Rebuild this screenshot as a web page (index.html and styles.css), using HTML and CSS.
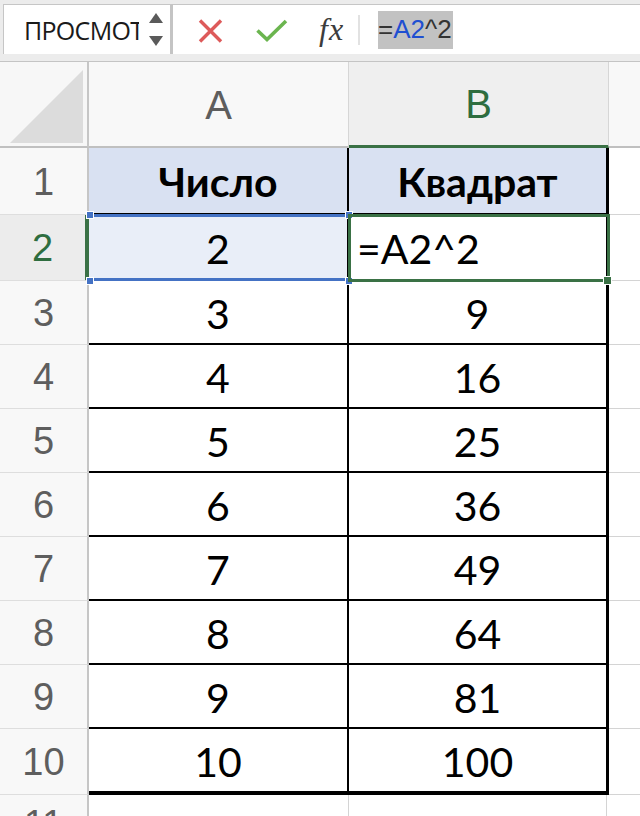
FILE: index.html
```html
<!DOCTYPE html>
<html lang="ru">
<head>
<meta charset="utf-8">
<title>Excel</title>
<link rel="stylesheet" href="styles.css">
</head>
<body>
<div class="toolbar">
  <div class="namebox">
    <div class="name"><span>ПРОСМОТР</span></div>
    <div class="spin">
      <svg width="16" height="36" viewBox="0 0 16 36"><polygon points="8,1 15,11 1,11" fill="#5a5a5a"/><polygon points="1,24 15,24 8,34" fill="#5a5a5a"/></svg>
    </div>
  </div>
  <div class="fbar">
    <span class="btn cancel"><svg width="26" height="24" viewBox="0 0 26 24"><path d="M2 1.5 L23 22.5 M23 1.5 L2 22.5" stroke="#dd5a5a" stroke-width="3.4" fill="none"/></svg></span>
    <span class="btn enter"><svg width="32" height="24" viewBox="0 0 32 24"><path d="M1.5 11.5 L11 20.5 L30 2" stroke="#6bb54f" stroke-width="3.6" fill="none"/></svg></span>
    <span class="fx">fx</span>
    <span class="divider"></span>
    <span class="formula"><span>=</span><span class="ref">A2</span><span>^2</span></span>
  </div>
</div>
<div class="sheet">
  <div class="corner"><svg width="89" height="84" viewBox="0 0 89 84"><polygon points="10,81 83,81 83,8" fill="#dcdcdc"/></svg></div>
  <div class="ch">A</div>
  <div class="ch chsel">B</div>
  <div class="ch chx"></div>

  <div class="rh r1">1</div>
  <div class="c a r1 hdr">Число</div>
  <div class="c b r1 hdr">Квадрат</div>
  <div class="x r1"></div>

  <div class="rh r2 rhsel">2</div>
  <div class="c a r2 ref-cell">2</div>
  <div class="c b r2 edit">=A2^2</div>
  <div class="x r2"></div>

  <div class="rh">3</div><div class="c a">3</div><div class="c b">9</div><div class="x"></div>
  <div class="rh">4</div><div class="c a">4</div><div class="c b">16</div><div class="x"></div>
  <div class="rh">5</div><div class="c a">5</div><div class="c b">25</div><div class="x"></div>
  <div class="rh">6</div><div class="c a">6</div><div class="c b">36</div><div class="x"></div>
  <div class="rh">7</div><div class="c a">7</div><div class="c b">49</div><div class="x"></div>
  <div class="rh">8</div><div class="c a">8</div><div class="c b">64</div><div class="x"></div>
  <div class="rh">9</div><div class="c a">9</div><div class="c b">81</div><div class="x"></div>
  <div class="rh r10">10</div><div class="c a r10 last">10</div><div class="c b r10 last">100</div><div class="x r10"></div>
  <div class="rh r11">11</div><div class="e a r11"></div><div class="e b r11"></div><div class="x r11"></div>

  <div class="refbox"></div>
  <span class="h h1"></span><span class="h h2"></span><span class="h h3"></span><span class="h h4"></span>
  <div class="activebox"></div>
  <span class="fill"></span>
</div>
</body>
</html>
```
FILE: styles.css
```css
* { box-sizing: border-box; }
html, body { margin: 0; padding: 0; }
body {
  width: 640px;
  height: 816px;
  overflow: hidden;
  background: #ffffff;
  font-family: "Liberation Sans", Arial, sans-serif;
}

/* ---------- formula bar ---------- */
.toolbar {
  height: 62px;
  display: flex;
  align-items: flex-start;
  background: #ececec;
  padding: 4px 0 0 3px;
  border-bottom: 1px solid #c4c4c4;
}
.namebox {
  width: 170px;
  height: 50px;
  background: #ffffff;
  border-top: 1px solid #c6c6c6;
  border-left: 1px solid #c6c6c6;
  border-right: 3px solid #c4c4c4;
  display: flex;
  align-items: center;
}
.name {
  width: 115px;
  margin-left: 20px;
  overflow: hidden;
  white-space: nowrap;
  font-family: "Open Sans", "Noto Sans", sans-serif;
  font-size: 25px;
  color: #1a1a1a;
  letter-spacing: -0.7px;
}
.spin {
  margin-left: 9px;
  display: flex;
  align-items: center;
}
.spin svg { display: block; }
.fbar {
  flex: 1;
  height: 50px;
  background: #ffffff;
  border-top: 1px solid #c6c6c6;
  display: flex;
  align-items: center;
}
.btn { display: flex; align-items: center; }
.btn svg { display: block; }
.cancel { margin-left: 25px; margin-top: 3px; }
.enter { margin-left: 32px; margin-top: 2px; }
.fx {
  margin-left: 31px;
  font-family: "Liberation Serif", "Times New Roman", serif;
  font-style: italic;
  font-size: 32px;
  color: #3c3c3c;
  letter-spacing: 1px;
}
.divider {
  width: 2px;
  height: 30px;
  background: #e2e2e2;
  margin-left: 14px;
}
.formula {
  margin-left: 18px;
  height: 38px;
  background: #c2c2c2;
  display: flex;
  align-items: center;
  font-size: 26px;
  color: #333333;
  padding-right: 1px;
}
.formula .ref { color: #1f4fd1; }

/* ---------- sheet ---------- */
.sheet {
  position: relative;
  display: grid;
  grid-template-columns: 89px 260px 260px 31px;
  grid-template-rows: 86px 67px 66px repeat(7, 64px) 66px 40px;
}
.corner {
  background: #f7f7f7;
  border-right: 2px solid #c6c6c6;
  border-bottom: 2px solid #c0c0c0;
}
.corner svg { display: block; }
.ch {
  background: #f8f8f8;
  border-right: 1px solid #d6d6d6;
  border-bottom: 2px solid #c0c0c0;
  display: flex;
  align-items: center;
  justify-content: center;
  font-size: 40px;
  color: #5e5e5e;
  padding-top: 2px;
}
.chsel {
  background: #efefef;
  color: #2e6d3f;
  border-bottom: 3px solid #3a7145;
}
.chx { border-right: none; background: #f8f8f8; }

.rh {
  background: #f8f8f8;
  border-right: 2px solid #c6c6c6;
  border-bottom: 1px solid #dedede;
  display: flex;
  align-items: center;
  justify-content: center;
  font-size: 38px;
  color: #5e5e5e;
  padding-top: 2px;
}
.rhsel {
  background: #ececec;
  color: #2e6d3f;
  border-right: 4px solid #3a7145;
}
.r11 { align-items: flex-start; padding-top: 8px; }

.c {
  display: flex;
  align-items: center;
  justify-content: center;
  font-family: "Lato", "Noto Sans", sans-serif;
  font-size: 41px;
  color: #000000;
  border-bottom: 2px solid #000000;
  padding-top: 2px;
}
.a { border-right: 2px solid #000000; }
.b { border-right: 3px solid #000000; }
.last { border-bottom: 4px solid #000000; }
.hdr {
  background: #d9e1f2;
  font-weight: 700;
}
.ref-cell { background: #e9eef8; }
.edit {
  justify-content: flex-start;
  padding-left: 8px;
}
.e.a { border-right: 1px solid #d4d4d4; }
.e.b { border-right: 1px solid #d4d4d4; margin-right: 2px; }
.x { border-bottom: 1px solid #d4d4d4; }

/* ---------- selection overlays ---------- */
.refbox {
  position: absolute;
  left: 89px;
  top: 152px;
  width: 260px;
  height: 67px;
  border-top: 3px solid #4472c4;
  border-bottom: 3px solid #4472c4;
}
.h {
  position: absolute;
  width: 8px;
  height: 8px;
  background: #4472c4;
  border: 1px solid #ffffff;
}
.h1 { left: 86px; top: 149px; }
.h2 { left: 345px; top: 149px; }
.h3 { left: 86px; top: 215px; }
.h4 { left: 345px; top: 215px; }
.activebox {
  position: absolute;
  left: 348px;
  top: 152px;
  width: 262px;
  height: 68px;
  border: 3px solid #3a7145;
}
.fill {
  position: absolute;
  left: 603px;
  top: 214px;
  width: 9px;
  height: 9px;
  background: #3a7145;
  border: 1px solid #ffffff;
}
```
